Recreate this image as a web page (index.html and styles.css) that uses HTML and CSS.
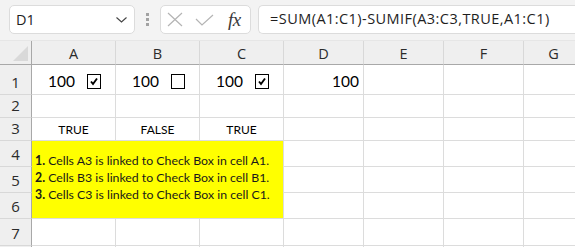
FILE: index.html
```html
<!DOCTYPE html>
<html lang="en">
<head>
  <meta charset="UTF-8" />
  <meta name="viewport" content="width=device-width, initial-scale=1.0" />
  <title>Check Box SUMIF</title>
  <link rel="stylesheet" href="styles.css">
</head>
<body>

  <div class="formula-bar">
    <div class="name-box">
      <span>D1</span>
      <svg class="chevron" width="11" height="6" viewBox="0 0 11 6"><path d="M0.5 0.5 L5.5 5 L10.5 0.5" fill="none" stroke="#444" stroke-width="1.1"/></svg>
    </div>
    <div class="grip"><i></i><i></i><i></i></div>
    <div class="fx-box">
      <svg width="16" height="15" viewBox="0 0 16 15"><path d="M1 1 L15 14 M15 1 L1 14" stroke="#b4b4b4" stroke-width="1.2" fill="none"/></svg>
      <svg width="19" height="12" viewBox="0 0 19 12"><path d="M1 5 L7 11 L18 1" stroke="#b4b4b4" stroke-width="1.2" fill="none"/></svg>
      <span class="fx">fx</span>
    </div>
    <div class="formula">=SUM(A1:C1)-SUMIF(A3:C3,TRUE,A1:C1)</div>
  </div>

  <div class="sheet">
    <div class="corner"><i class="tri"></i></div>
    <div class="col-head">A</div>
    <div class="col-head">B</div>
    <div class="col-head">C</div>
    <div class="col-head">D</div>
    <div class="col-head">E</div>
    <div class="col-head">F</div>
    <div class="col-head">G</div>

    <div class="row-head">1</div>
    <div class="cell check-cell"><span>100</span><span class="box checked"></span></div>
    <div class="cell check-cell"><span>100</span><span class="box"></span></div>
    <div class="cell check-cell"><span>100</span><span class="box checked"></span></div>
    <div class="cell num">100</div>
    <div class="cell"></div>
    <div class="cell"></div>
    <div class="cell"></div>

    <div class="row-head">2</div>
    <div class="cell"></div>
    <div class="cell"></div>
    <div class="cell"></div>
    <div class="cell"></div>
    <div class="cell"></div>
    <div class="cell"></div>
    <div class="cell"></div>

    <div class="row-head">3</div>
    <div class="cell bool">TRUE</div>
    <div class="cell bool">FALSE</div>
    <div class="cell bool">TRUE</div>
    <div class="cell"></div>
    <div class="cell"></div>
    <div class="cell"></div>
    <div class="cell"></div>

    <div class="note">
      <p><b>1.</b> Cells A3 is linked to Check Box in cell A1.</p>
      <p><b>2.</b> Cells B3 is linked to Check Box in cell B1.</p>
      <p><b>3.</b> Cells C3 is linked to Check Box in cell C1.</p>
    </div>

    <div class="row-head">4</div>
    <div class="cell"></div>
    <div class="cell"></div>
    <div class="cell"></div>
    <div class="cell"></div>

    <div class="row-head">5</div>
    <div class="cell"></div>
    <div class="cell"></div>
    <div class="cell"></div>
    <div class="cell"></div>

    <div class="row-head">6</div>
    <div class="cell"></div>
    <div class="cell"></div>
    <div class="cell"></div>
    <div class="cell"></div>

    <div class="row-head">7</div>
    <div class="cell"></div>
    <div class="cell"></div>
    <div class="cell"></div>
    <div class="cell"></div>
    <div class="cell"></div>
    <div class="cell"></div>
    <div class="cell"></div>

    <div class="row-head"></div>
    <div class="cell"></div>
    <div class="cell"></div>
    <div class="cell"></div>
    <div class="cell"></div>
    <div class="cell"></div>
    <div class="cell"></div>
    <div class="cell"></div>
  </div>

</body>
</html>
```

FILE: styles.css
```css
* {
  box-sizing: border-box;
}

body {
  margin: 0;
  padding: 0;
  width: 575px;
  height: 247px;
  overflow: hidden;
  background: #fff;
  font-family: "Open Sans", "Noto Sans", sans-serif;
}

/* formula bar */
.formula-bar {
  display: flex;
  align-items: flex-start;
  height: 41px;
  padding: 5px 0 0 9px;
  background: #f3f3f3;
  border-bottom: 1px solid #e6e6e6;
}

.name-box {
  display: flex;
  align-items: center;
  justify-content: space-between;
  width: 126px;
  height: 29px;
  padding: 0 7px 0 6px;
  background: #fff;
  border: 1px solid #dcdcdc;
  border-radius: 5px;
  font-size: 14.5px;
  color: #1e1e1e;
}

.grip {
  display: flex;
  flex-direction: column;
  gap: 2px;
  margin: 8px 11px 0 11px;
}

.grip i {
  display: block;
  width: 3px;
  height: 3px;
  background: #a2a2a2;
}

.fx-box {
  display: flex;
  align-items: center;
  gap: 12px;
  width: 91px;
  height: 29px;
  padding: 0 6px 0 6px;
  background: #fff;
  border: 1px solid #dcdcdc;
  border-radius: 5px;
}

.fx {
  font-family: "Liberation Serif", serif;
  font-style: italic;
  font-size: 19px;
  color: #3a3a3a;
  margin-left: 2px;
  letter-spacing: -0.5px;
}

.formula {
  flex: 1;
  height: 29px;
  margin-left: 7px;
  padding: 3px 0 0 11px;
  background: #fff;
  border: 1px solid #dcdcdc;
  border-right: none;
  border-radius: 5px 0 0 5px;
  font-size: 14.5px;
  letter-spacing: 0.45px;
  color: #1e1e1e;
  white-space: nowrap;
}

/* grid */
.sheet {
  display: grid;
  height: 206px;
  grid-template-columns: 32px 84px 84px 84px 80px 80px 80px 60px;
  grid-template-rows: 24px 30px 23px 23px 26px 26px 26px 27px 1fr;
  overflow: hidden;
}

.corner {
  display: flex;
  align-items: flex-end;
  justify-content: flex-end;
  padding: 0 3px 3px 0;
  background: #efefef;
  border-right: 1px solid #a8a8a8;
  border-bottom: 1px solid #a8a8a8;
}

.tri {
  display: block;
  width: 15px;
  height: 15px;
  background: #d9d9d9;
  clip-path: polygon(100% 0, 100% 100%, 0 100%);
}

.col-head {
  display: flex;
  align-items: center;
  justify-content: center;
  padding-top: 1px;
  background: #efefef;
  border-right: 1px solid #d8d8d8;
  border-bottom: 1px solid #a8a8a8;
  font-size: 14.5px;
  color: #2b2b2b;
}

.row-head {
  display: flex;
  align-items: flex-end;
  justify-content: center;
  padding-bottom: 2px;
  background: #efefef;
  border-right: 1px solid #a8a8a8;
  border-bottom: 1px solid #d8d8d8;
  font-size: 15px;
  color: #2b2b2b;
}

.cell {
  border-right: 1px solid #dcdcdc;
  border-bottom: 1px solid #dcdcdc;
  font-family: Lato, "Liberation Sans", sans-serif;
  color: #000;
}

.check-cell {
  display: flex;
  align-items: flex-end;
  gap: 12px;
  padding: 0 0 4px 16px;
  font-size: 15.5px;
}

.box {
  width: 14px;
  height: 15px;
  margin-bottom: 1px;
  border: 1px solid #000;
  background: #fff;
}

.box.checked {
  background: #fff url("data:image/svg+xml,%3Csvg xmlns='http://www.w3.org/2000/svg' width='12' height='13' viewBox='0 0 12 13'%3E%3Cpath d='M3 6.5 L5 9 L9 3.5' fill='none' stroke='%23000' stroke-width='1.9'/%3E%3C/svg%3E") no-repeat center;
}

.num {
  display: flex;
  align-items: flex-end;
  justify-content: flex-end;
  padding: 0 4px 4px 0;
  font-size: 15.5px;
}

.bool {
  display: flex;
  align-items: flex-end;
  justify-content: center;
  padding-bottom: 3px;
  font-size: 12px;
}

.note {
  grid-column: 2 / 5;
  grid-row: 5 / 8;
  padding: 11px 0 0 3px;
  background: #ffff00;
  border-right: 1px solid #dcdcdc;
  border-bottom: 1px solid #dcdcdc;
  font-family: Lato, "Liberation Sans", sans-serif;
  font-size: 12.3px;
  color: #1a1a1a;
}

.note p {
  margin: 0;
  line-height: 17px;
}
```
